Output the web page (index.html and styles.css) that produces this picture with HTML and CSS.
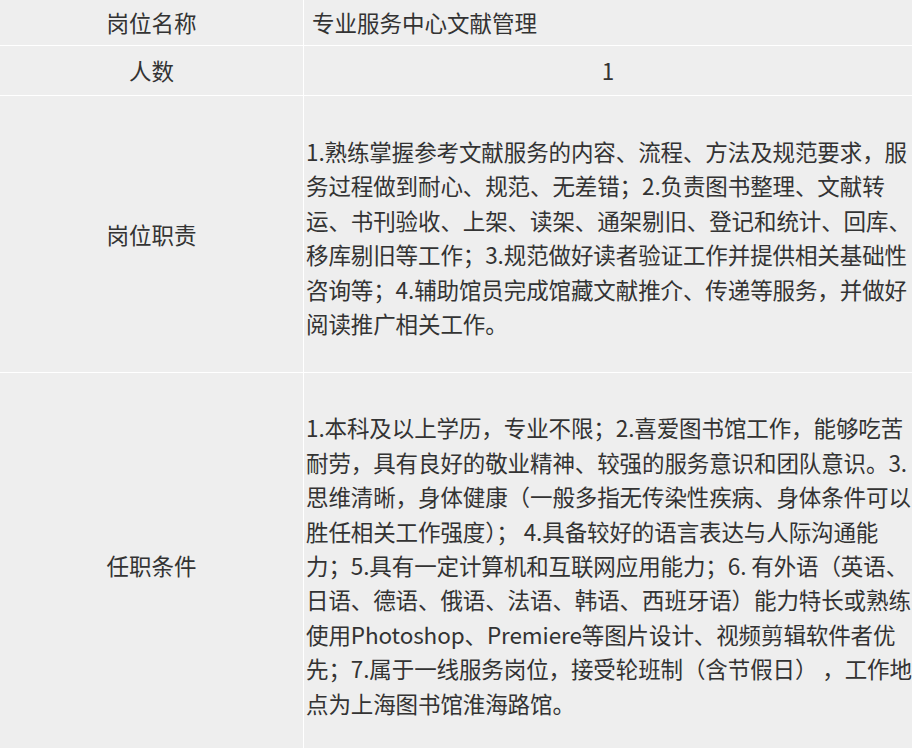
FILE: index.html
```html
<!DOCTYPE html>
<html lang="zh-CN">
<head>
<meta charset="utf-8">
<title>岗位信息</title>
<link rel="stylesheet" href="styles.css">
</head>
<body>
<div class="table">
  <div class="cell label row-title">岗位名称</div>
  <div class="cell value row-title">专业服务中心文献管理</div>

  <div class="cell label row-count">人数</div>
  <div class="cell value center row-count">1</div>

  <div class="cell label">岗位职责</div>
  <div class="cell value long long-a">1.熟练掌握参考文献服务的内容、流程、方法及规范要求，服<br>务过程做到耐心、规范、无差错；2.负责图书整理、文献转<br>运、书刊验收、上架、读架、通架剔旧、登记和统计、回库、<br>移库剔旧等工作；3.规范做好读者验证工作并提供相关基础性<br>咨询等；4.辅助馆员完成馆藏文献推介、传递等服务，并做好<br>阅读推广相关工作。</div>

  <div class="cell label">任职条件</div>
  <div class="cell value long long-b">1.本科及以上学历，专业不限；2.喜爱图书馆工作，能够吃苦<br>耐劳，具有良好的敬业精神、较强的服务意识和团队意识。3.<br>思维清晰，身体健康（一般多指无传染性疾病、身体条件可以<br>胜任相关工作强度）； 4.具备较好的语言表达与人际沟通能<br>力；5.具有一定计算机和互联网应用能力；6. 有外语（英语、<br>日语、德语、俄语、法语、韩语、西班牙语）能力特长或熟练<br>使用Photoshop、Premiere等图片设计、视频剪辑软件者优<br>先；7.属于一线服务岗位，接受轮班制（含节假日） ，工作地<br>点为上海图书馆淮海路馆。</div>
</div>
</body>
</html>
```

FILE: styles.css
```css
html, body {
  margin: 0;
  padding: 0;
  overflow: hidden;
  background: #ffffff;
}

body {
  font-family: "Noto Sans CJK SC", "Noto Sans", sans-serif;
  font-size: 22.5px;
  color: #333333;
}

.table {
  display: grid;
  grid-template-columns: 303px 1fr;
  gap: 1px;
  background: #ffffff;
  width: 912px;
}

.cell {
  background: #eeeeee;
  display: flex;
  align-items: center;
  line-height: 34.4px;
}

.label {
  justify-content: center;
}

.value {
  padding-left: 8px;
}

.value.center {
  justify-content: center;
  padding-left: 0;
}

.row-title {
  height: 45px;
}

.row-count {
  height: 49px;
}

.long {
  display: block;
  white-space: nowrap;
  padding-left: 2px;
  letter-spacing: -0.1px;
}

.long-a {
  padding-top: 38px;
  padding-bottom: 32px;
}

.long-b {
  padding-top: 37px;
  padding-bottom: 36px;
}
```
